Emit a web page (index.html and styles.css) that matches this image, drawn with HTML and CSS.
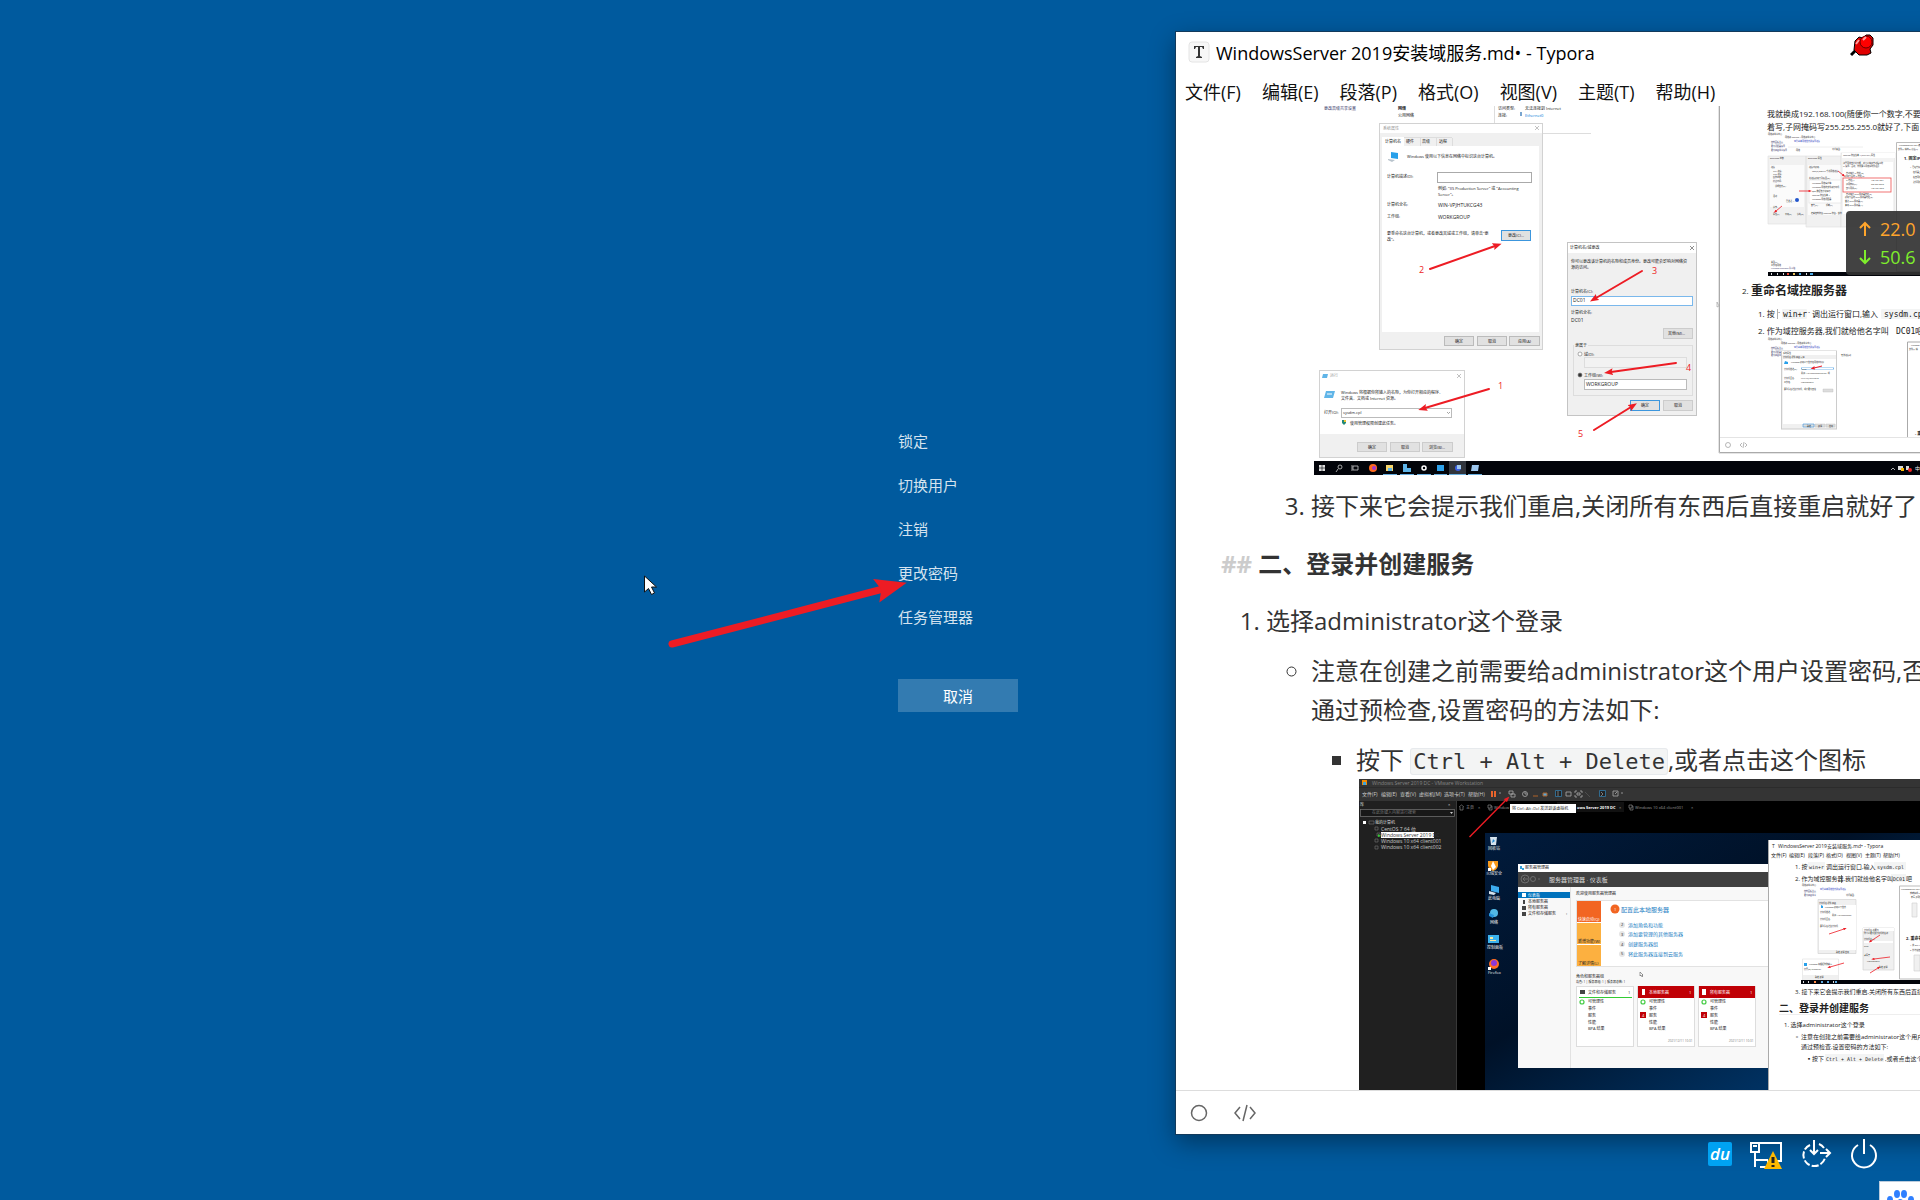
FILE: index.html
```html
<!DOCTYPE html>
<html lang="zh-CN">
<head>
  <meta charset="UTF-8">
  <meta name="viewport" content="width=device-width, initial-scale=1.0">
  <title>WindowsServer 2019安装域服务</title>
  <link rel="stylesheet" href="styles.css">
</head>
<body>
  <div class="desktop">
    <main class="security">
      <div class="security-menu">
        <button class="option">锁定</button>
        <button class="option">切换用户</button>
        <button class="option">注销</button>
        <button class="option">更改密码</button>
        <button class="option">任务管理器</button>
        <button class="cancel">取消</button>
        <svg class="pointer-art" viewBox="0 0 280 90" aria-hidden="true">
          <defs>
            <marker id="head" viewBox="0 0 9 7" refX="2" refY="3.5" markerWidth="4.5" markerHeight="3.5" orient="auto">
              <path d="M0 0 9 3.5 0 7 1.5 3.5z" fill="#ed1c24"/>
            </marker>
          </defs>
          <path d="M32 74 243 19" stroke="#ed1c24" stroke-width="7" stroke-linecap="round" marker-end="url(#head)"/>
          <path d="M4.500 6v16l4-3.500 3 6 3-1.500-3-6h5z" fill="#fff" stroke="#111" stroke-width="1"/>
        </svg>
      </div>
    </main>

    <section class="window">
      <header class="titlebar">
        <svg class="app-icon" viewBox="0 0 22 22" aria-hidden="true">
          <rect x="1" y="1" width="20" height="20" rx="3" fill="#f7f7f7" stroke="#e4e4e4"/>
          <path d="M6 5h10v3h-1l-1-2h-2v9l2 1v1H8v-1l2-1V6H8L7 8H6z" fill="#333"/>
        </svg>
        <h1>WindowsServer 2019安装域服务.md• - Typora</h1>
      </header>
      <nav class="menubar">
        <button>文件(F)</button>
        <button>编辑(E)</button>
        <button>段落(P)</button>
        <button>格式(O)</button>
        <button>视图(V)</button>
        <button>主题(T)</button>
        <button>帮助(H)</button>
      </nav>

      <article class="content">
        <ol class="outer">
          <li class="plain">
            <ol class="inner">
              <li class="plain">
                <svg class="shot" width="710" height="369" viewBox="1314 106 710 369">
                  <!-- 网络设置页面 -->
                  <g class="t4">
                    <text x="1324" y="110" fill="#336">更改高级共享设置</text>
                    <text x="1398" y="110" font-weight="bold">网络</text>
                    <text x="1398" y="117">公用网络</text>
                    <text x="1498" y="110">访问类型:</text>
                    <text x="1525" y="110">无法连接到 Internet</text>
                    <text x="1498" y="117">连接:</text>
                    <text x="1525" y="117" fill="#0078d7">Ethernet0</text>
                  </g>
                  <rect x="1520" y="112" width="2" height="4" fill="#79a5cf"/>
                  <path d="M1494.500 106v17M1543 133.500h48" stroke="#ddd"/>

                  <!-- 系统属性 -->
                  <rect x="1379.500" y="123.500" width="163" height="226" fill="#f0f0f0" stroke="#d2d2d2"/>
                  <rect x="1380" y="124" width="162" height="9" fill="#fff"/>
                  <rect x="1382" y="137" width="22" height="10" fill="#fff"/>
                  <rect x="1382" y="146" width="157" height="186" fill="#fff"/>
                  <path d="M1420.500 138v8M1436.500 138v8M1452.500 138v8M1404 137.500h48" stroke="#ddd"/>
                  <path d="m1535 126 4 4m0-4-4 4" stroke="#999" stroke-width=".6"/>
                  <path d="m1391 152 7 1v6l-7-1z" fill="#28a0ea"/>
                  <path d="m1388 159 7 1-3 2-4-2z" fill="#b8c3cc"/>
                  <g class="t4">
                    <text x="1383" y="130" fill="#999">系统属性</text>
                    <text x="1385" y="143">计算机名</text>
                    <text x="1406" y="143">硬件</text>
                    <text x="1422" y="143">高级</text>
                    <text x="1439" y="143">远程</text>
                    <text x="1387" y="178">计算机描述(D):</text>
                    <text x="1387" y="206">计算机全名:</text>
                    <text x="1387" y="218">工作组:</text>
                    <text x="1387" y="235">要重命名这台计算机，或者更改其域或工作组，请单击"更</text>
                    <text x="1387" y="241">改"。</text>
                    <text x="1407" y="158">Windows 使用以下信息在网络中标识这台计算机。</text>
                    <text x="1438" y="190">例如: "IIS Production Server" 或 "Accounting</text>
                    <text x="1438" y="196">Server"。</text>
                  </g>
                  <g class="t5">
                    <text x="1438" y="207">WIN-VPJHTUKCG43</text>
                    <text x="1438" y="219">WORKGROUP</text>
                  </g>
                  <rect x="1437.500" y="172.500" width="94" height="10" fill="#fff" stroke="#aaa"/>
                  <g fill="#e1e1e1" stroke="#bbb">
                    <rect x="1444.500" y="336.500" width="29" height="9"/>
                    <rect x="1477.500" y="336.500" width="29" height="9"/>
                    <rect x="1509.500" y="336.500" width="30" height="9"/>
                    <rect x="1501.500" y="230.500" width="29" height="10" stroke="#3c96dd"/>
                  </g>
                  <g class="t4">
                    <text x="1508" y="237">更改(C)...</text>
                    <text x="1455" y="343">确定</text>
                    <text x="1488" y="343">取消</text>
                    <text x="1518" y="343">应用(A)</text>
                  </g>

                  <!-- 计算机名/域更改 -->
                  <rect x="1567.500" y="242.500" width="129" height="173" fill="#f0f0f0" stroke="#c4c4c4"/>
                  <rect x="1568" y="243" width="128" height="10" fill="#fff"/>
                  <path d="m1690 246 4 4m0-4-4 4" stroke="#444" stroke-width=".6"/>
                  <rect x="1573.500" y="345.500" width="119" height="50" fill="none" stroke="#ddd"/>
                  <rect x="1574" y="343" width="14" height="5" fill="#f0f0f0"/>
                  <rect x="1571.500" y="296.500" width="121" height="9" fill="#fff" stroke="#7ab8ec"/>
                  <rect x="1584.500" y="357.500" width="102" height="10" fill="#f2f2f2" stroke="#ddd"/>
                  <rect x="1584.500" y="379.500" width="102" height="10" fill="#fff" stroke="#bbb"/>
                  <g fill="#e1e1e1" stroke="#ccc">
                    <rect x="1663.500" y="328.500" width="29" height="10"/>
                    <rect x="1630.500" y="400.500" width="29" height="10" stroke="#3c96dd"/>
                    <rect x="1663.500" y="400.500" width="29" height="10"/>
                  </g>
                  <circle cx="1580" cy="354" r="2" fill="#fff" stroke="#777" stroke-width=".6"/>
                  <circle cx="1580" cy="375" r="2" fill="#333" stroke="#777" stroke-width=".6"/>
                  <g class="t4">
                    <text x="1570" y="249">计算机名/域更改</text>
                    <text x="1571" y="263">你可以更改该计算机的名称和成员身份。更改可能会影响对网络资</text>
                    <text x="1571" y="269">源的访问。</text>
                    <text x="1571" y="293">计算机名(C):</text>
                    <text x="1571" y="314">计算机全名:</text>
                    <text x="1668" y="335">其他(M)...</text>
                    <text x="1575" y="347">隶属于</text>
                    <text x="1584" y="356">域(D):</text>
                    <text x="1584" y="377">工作组(W):</text>
                    <text x="1641" y="407">确定</text>
                    <text x="1674" y="407">取消</text>
                  </g>
                  <g class="t5">
                    <text x="1573" y="302">DC01</text>
                    <text x="1571" y="322">DC01</text>
                    <text x="1586" y="386">WORKGROUP</text>
                  </g>

                  <!-- 运行 -->
                  <rect x="1319.500" y="370.500" width="145" height="87" fill="#fff" stroke="#d2d2d2"/>
                  <rect x="1320" y="434" width="144" height="23" fill="#f0f0f0"/>
                  <path d="m1457 374 4 4m0-4-4 4" stroke="#999" stroke-width=".6"/>
                  <path d="M1323 374h5l-1 4h-5zM1326 391h9l-2 7h-9z" fill="#60b5e8"/>
                  <path d="M1327 394h5" stroke="#fff"/>
                  <rect x="1341.500" y="408.500" width="110" height="9" fill="#fff" stroke="#bbb"/>
                  <path d="m1447 412 1.500 1.500 1.500-1.500" fill="none" stroke="#666" stroke-width=".6"/>
                  <path d="M1342 420h4v3l-2 2-2-2z" fill="#287"/>
                  <path d="M1344 420h2v2h-2z" fill="#f2c230"/>
                  <g fill="#e1e1e1" stroke="#ccc">
                    <rect x="1357.500" y="442.500" width="29" height="9"/>
                    <rect x="1390.500" y="442.500" width="29" height="9"/>
                    <rect x="1422.500" y="442.500" width="30" height="9"/>
                  </g>
                  <g class="t4">
                    <text x="1330" y="377" fill="#999">运行</text>
                    <text x="1341" y="394">Windows 将根据你所输入的名称，为你打开相应的程序、</text>
                    <text x="1341" y="400">文件夹、文档或 Internet 资源。</text>
                    <text x="1324" y="414">打开(O):</text>
                    <text x="1343" y="414">sysdm.cpl</text>
                    <text x="1350" y="425">使用管理权限创建此任务。</text>
                    <text x="1368" y="449">确定</text>
                    <text x="1401" y="449">取消</text>
                    <text x="1429" y="449">浏览(B)...</text>
                  </g>

                  <g stroke="#ed1c24" stroke-width="2" stroke-linecap="round">
                    <path d="M1430 269 1495 246" marker-end="url(#head)"/>
                    <path d="M1642 271 1596 298" marker-end="url(#head)"/>
                    <path d="M1676 363 1611 372" marker-end="url(#head)"/>
                    <path d="M1594 430 1631 407" marker-end="url(#head)"/>
                    <path d="M1489 389 1425 408" marker-end="url(#head)"/>
                  </g>
                  <g class="t9" fill="#ed1c24">
                    <text x="1498" y="389">1</text>
                    <text x="1419" y="273">2</text>
                    <text x="1652" y="274">3</text>
                    <text x="1686" y="371">4</text>
                    <text x="1578" y="437">5</text>
                  </g>

                  <!-- 任务栏 -->
                  <rect x="1314" y="461" width="710" height="14" fill="#02040a"/>
                  <path d="M1319 465h6v6h-6z" fill="#ddd"/>
                  <path d="M1322 465v6M1319 468h6" stroke="#02040a" stroke-width=".6"/>
                  <g fill="none" stroke="#ccc" stroke-width=".8">
                    <circle cx="1340" cy="467" r="2"/>
                    <path d="m1338 469-2 3M1353 466h5v4h-5zM1352 465v6"/>
                    <circle cx="1424" cy="468" r="2" stroke="#fff" stroke-width="1.500"/>
                  </g>
                  <circle cx="1373" cy="468" r="4" fill="#ff6a1f"/>
                  <circle cx="1374" cy="468" r="2" fill="#a13ad0"/>
                  <path d="M1386 465h7v6h-7z" fill="#f6d56b"/>
                  <path d="M1388 468h4v3h-4zM1403 464h4v4h4v4h-8z" fill="#5eb4e8"/>
                  <path d="M1437 465h7v6h-7z" fill="#2ea1ea"/>
                  <rect x="1449" y="461" width="17" height="14" fill="#30343c"/>
                  <circle cx="1458" cy="468" r="3" fill="#3a5fe0"/>
                  <path d="M1457 465h4v4h-4zM1472 465h7l-1 6h-7z" fill="#9cc6ee"/>
                  <path d="M1383 474.500h14M1400 474.500h14M1417 474.500h14M1434 474.500h13M1449 474.500h17M1468 474.500h14" stroke="#69afe0"/>
                  <path d="m1891 470 2-2 2 2" fill="none" stroke="#ddd" stroke-width=".8"/>
                  <path d="M1898 466h5v4h-5zM1906 466h3v4h-3z" fill="#ddd"/>
                  <path d="M1901 468h3v3h-3z" fill="#fb0"/>
                  <circle cx="1910" cy="470" r="2" fill="#e22"/>
                  <text class="t5" x="1915" y="470" fill="#eee">中</text>

                  <!-- 右侧的文档窗口 -->
                  <path d="M1720 106h304v346h-304z" fill="#fff"/>
                  <path d="M1719.500 106v346.500H2024" fill="none" stroke="#aaa"/>
                  <path d="M1718.500 106v347M1719 453.500h305M1720 437.500h304" stroke="#e4e4e4"/>
                  <path d="M1717 302v5l2-1z" fill="#fff" stroke="#999" stroke-width=".6"/>
                  <g class="t8">
                    <text x="1767" y="117">我就换成192.168.100(随便你一个数字,不要跟</text>
                    <text x="1767" y="130">着写,子网掩码写255.255.255.0就好了,下面</text>
                  </g>
                  <g class="t2">
                    <text x="1768" y="135">网络和共享中心</text>
                    <text x="1785" y="138">网络和 Internet &gt; 网络和共享中心</text>
                    <text x="1794" y="142" fill="#23b">查看基本网络信息并设置连接</text>
                    <text x="1771" y="143" fill="#336">控制面板主页</text>
                    <text x="1771" y="147" fill="#336">更改适配器设置</text>
                    <text x="1771" y="151" fill="#336">更改高级共享设置</text>
                    <text x="1796" y="151">网络</text>
                    <text x="1832" y="150">访问类型:</text>
                  </g>
                  <path d="M1788 147h75" stroke="#eee"/>
                  <path d="M1768 156h38v68h-38zM1806 156h35v71h-35z" fill="#f1f1f1" stroke="#ddd" stroke-width=".6"/>
                  <path d="M1770 165h34v42h-34zM1808 165h33v50h-33z" fill="#fbfbfb"/>
                  <rect x="1841" y="153" width="54" height="74" fill="#f3f3f3" stroke="#ddd" stroke-width=".6"/>
                  <path d="M1842 153h53v5h-53zM1843 162h50v52h-50z" fill="#fff"/>
                  <rect x="1809" y="180" width="32" height="23" fill="#fff" stroke="#ddd" stroke-width=".6"/>
                  <g class="t2">
                    <text x="1770" y="159">Ethernet0 状态</text>
                    <text x="1808" y="159">Ethernet0 属性</text>
                    <text x="1843" y="156">Internet 协议版本 4 (TCP/IPv4) 属性</text>
                    <text x="1771" y="168">连接</text>
                    <text x="1773" y="172">IPv4 连接:</text>
                    <text x="1773" y="175">IPv6 连接:</text>
                    <text x="1773" y="178">媒体状态:</text>
                    <text x="1773" y="182">持续时间:</text>
                    <text x="1775" y="187">详细信息(E)...</text>
                    <text x="1773" y="197">活动</text>
                    <text x="1786" y="202">已发送 —</text>
                    <text x="1773" y="208">字节:</text>
                    <text x="1773" y="215">属性(P)</text>
                    <text x="1785" y="215">禁用(D)</text>
                    <text x="1797" y="215">诊断(G)</text>
                    <text x="1809" y="168">连接时使用:</text>
                    <text x="1812" y="172">Intel(R) 82574L 千兆网络连接</text>
                    <text x="1809" y="179">此连接使用下列项目(O):</text>
                    <text x="1812" y="184">Microsoft 网络客户端</text>
                    <text x="1812" y="188">Microsoft 网络的文件和打印机</text>
                    <text x="1812" y="192">QoS 数据包计划程序</text>
                    <text x="1812" y="196">Internet 协议版本 4</text>
                    <text x="1812" y="200">Microsoft 网络适配器</text>
                    <text x="1811" y="206">安装(N)...</text>
                    <text x="1826" y="206">卸载(U)</text>
                    <text x="1811" y="214">传输控制协议/Internet 协议。该协</text>
                    <text x="1843" y="164">如果网络支持此功能，则可以获取自动指派的</text>
                    <text x="1843" y="167">IP 设置。否则，你需要从网络系统管理员</text>
                    <text x="1846" y="174">自动获得 IP 地址(O)</text>
                    <text x="1845" y="177">使用下面的 IP 地址(S):</text>
                    <text x="1846" y="181">IP 地址(I):</text>
                    <text x="1846" y="185">子网掩码(U):</text>
                    <text x="1846" y="189">默认网关(D):</text>
                    <text x="1871" y="181">192.168.100.1</text>
                    <text x="1871" y="185">255.255.255.0</text>
                    <text x="1871" y="189">192.168.100.2</text>
                    <text x="1846" y="195">自动获得 DNS 服务器地址(B)</text>
                    <text x="1845" y="198">使用下面的 DNS 服务器地址(E):</text>
                    <text x="1845" y="202">首选 DNS 服务器(P):</text>
                    <text x="1845" y="206">备用 DNS 服务器(A):</text>
                    <text x="1771" y="263">类型(T)</text>
                    <text x="1771" y="266">工作组网络</text>
                    <text x="1771" y="269" fill="#336">Windows Defender 防火墙</text>
                  </g>
                  <circle cx="1797" cy="200" r="2" fill="#25c"/>
                  <rect x="1843" y="178" width="48" height="14" fill="none" stroke="#ed5050" stroke-width=".8"/>
                  <g stroke="#ed1c24" stroke-width=".8">
                    <path d="M1799 191h10" marker-end="url(#head)"/>
                    <path d="m1782 206-6 5" marker-end="url(#head)"/>
                    <path d="m1838 171 5 4" marker-end="url(#head)"/>
                  </g>
                  <path d="M1896.500 142.500H2024v129h-127.500z" fill="#fff" stroke="#bbb"/>
                  <g class="t2">
                    <text x="1899" y="146">WindowsServer 2019安装域服务</text>
                    <text x="1898" y="150">文件(F) 编辑(E) 段落(P)</text>
                    <text x="1910" y="168">1. 已经装好</text>
                    <text x="1913" y="173">在机器上打开</text>
                    <text x="1913" y="178">右击网络图标</text>
                    <text x="1913" y="183">选择网络设置</text>
                  </g>
                  <text class="t4" x="1904" y="160" font-weight="bold">1. 固定IP</text>
                  <rect x="1768" y="272" width="256" height="4" fill="#02040a"/>
                  <path d="M1771 274h1m5 0h1m5 0h1m16 0h1m5 0h1" stroke="#ddd" stroke-width="2"/>
                  <path d="M1787 274h2" stroke="#e43" stroke-width="2"/>
                  <path d="M1793 274h2" stroke="#edc45d" stroke-width="2"/>
                  <path d="M1799 274h2m9 0h3" stroke="#4aa8e4" stroke-width="2"/>

                  <text class="t8" x="1742" y="294">2.</text>
                  <text class="t12" x="1751" y="295" font-weight="bold">重命名域控服务器</text>
                  <rect x="1782" y="309" width="25" height="10" rx="1" fill="#f3f4f4"/>
                  <rect x="1881" y="309" width="60" height="10" rx="1" fill="#f3f4f4"/>
                  <g class="t8">
                    <text x="1758" y="317">1. 按</text>
                    <text x="1778" y="317">`</text>
                    <text class="mono" x="1783" y="317">win+r</text>
                    <text x="1808" y="317">`</text>
                    <text x="1812" y="317">调出运行窗口,输入</text>
                    <text class="mono" x="1884" y="317">sysdm.cpl</text>
                    <text x="1758" y="334">2. 作为域控服务器,我们就给他名字叫</text>
                    <text class="mono" x="1896" y="334">DC01</text>
                    <text x="1915" y="334">吧</text>
                  </g>
                  <path d="M1777.500 309v10" stroke="#777" stroke-width=".6"/>

                  <g class="t2">
                    <text x="1768" y="340">网络和共享中心</text>
                    <text x="1781" y="344">网络和 Internet &gt; 网络和共享中心</text>
                    <text x="1794" y="348" fill="#23b">查看基本网络信息并设置连接</text>
                    <text x="1771" y="349" fill="#336">控制面板主页</text>
                    <text x="1771" y="353" fill="#336">更改适配器</text>
                    <text x="1771" y="356" fill="#336">更改高级共享</text>
                    <text x="1841" y="356">无法连接到</text>
                  </g>
                  <rect x="1781.500" y="351" width="55" height="78" fill="#f0f0f0" stroke="#ccc"/>
                  <path d="M1782 351h54v4h-54zM1783 359h53v65h-53z" fill="#fff"/>
                  <path d="M1801 368.500h33" stroke="#7ab8ec" stroke-width="2"/>
                  <path d="M1802 368.500h31" stroke="#fff"/>
                  <path d="m1785 361 3 1v2h-4z" fill="#28a0ea"/>
                  <path d="M1823 389h10v3h-10zM1815 424h10v3h-10zM1826 424h9v3h-9z" fill="#ddd" stroke="#bbb" stroke-width=".4"/>
                  <path d="M1803 424h11v3h-11z" fill="#ddd" stroke="#3c96dd" stroke-width=".6"/>
                  <g class="t2">
                    <text x="1783" y="354">系统属性</text>
                    <text x="1783" y="358">计算机名  硬件  高级  远程</text>
                    <text x="1791" y="363">Windows 使用以下信息在网络中标识</text>
                    <text x="1784" y="370">计算机描述(D):</text>
                    <text x="1802" y="370">DC01</text>
                    <text x="1801" y="374">例如: "IIS Production Server" 或</text>
                    <text x="1784" y="379">计算机全名:</text>
                    <text x="1801" y="379">WIN-VPJHTUKCG43</text>
                    <text x="1784" y="383">工作组:</text>
                    <text x="1801" y="383">WORKGROUP</text>
                    <text x="1784" y="390">要重命名这台计算机，或者更改其域</text>
                    <text x="1807" y="427">确定</text>
                    <text x="1818" y="427">取消</text>
                    <text x="1829" y="427">应用</text>
                  </g>
                  <path d="m1822 366-8 2" stroke="#ed1c24" marker-end="url(#head)"/>
                  <path d="M1907.500 437v-95H2024" fill="none" stroke="#aaa"/>
                  <g class="t2">
                    <text x="1911" y="346">Windows</text>
                    <text x="1909" y="350">文件(F) 编</text>
                  </g>
                  <text class="t4" x="1915" y="435" font-weight="bold">- 重</text>
                  <circle cx="1728" cy="445" r="2.500" fill="none" stroke="#888" stroke-width=".6"/>
                  <path d="m1742 443-2 2 2 2m3-4 2 2-2 2m-1-5-1 6" fill="none" stroke="#888" stroke-width=".6"/>
                </svg>
              </li>
              <li class="step" value="3">接下来它会提示我们重启,关闭所有东西后直接重启就好了</li>
            </ol>
          </li>
        </ol>

        <h2><span class="hash">##</span> 二、登录并创建服务</h2>

        <ol class="outer">
          <li>选择administrator这个登录
            <ul class="circle">
              <li>注意在创建之前需要给administrator这个用户设置密码,否则<br>通过预检查,设置密码的方法如下:
                <ul class="square">
                  <li>按下 <code>Ctrl + Alt + Delete</code>,或者点击这个图标
                    <svg class="shot" width="650" height="360" viewBox="1359 780 650 360">
                      <defs>
                        <linearGradient id="wall" x1="0" y1="0" x2="1" y2="1">
                          <stop offset="0" stop-color="#011b3c"/>
                          <stop offset=".35" stop-color="#001127"/>
                          <stop offset="1" stop-color="#005099"/>
                        </linearGradient>
                      </defs>
                      <!-- 虚拟机主窗口 -->
                      <rect x="1359" y="780" width="650" height="360" fill="#000"/>
                      <rect x="1359" y="780" width="650" height="22" fill="#343434"/>
                      <path d="M1359 788.500h650" stroke="#2b2b2b"/>
                      <rect x="1359" y="802" width="97" height="338" fill="#202020"/>
                      <path d="M1456.500 802v338" stroke="#383838"/>
                      <path d="M1362 781h5v5h-5z" fill="#f38b00"/>
                      <path d="M1363 783h3v3h-3z" fill="#41a3d8"/>
                      <text class="t5" x="1372" y="786" fill="#858585">Windows Server 2019 DC - VMware Workstation</text>
                      <g class="t5" fill="#ccc">
                        <text x="1362" y="797">文件(F)</text>
                        <text x="1381" y="797">编辑(E)</text>
                        <text x="1400" y="797">查看(V)</text>
                        <text x="1419" y="797">虚拟机(M)</text>
                        <text x="1444" y="797">选项卡(T)</text>
                        <text x="1468" y="797">帮助(H)</text>
                      </g>
                      <path d="M1492 792v6M1495 792v6" stroke="#e8642c" stroke-width="2"/>
                      <g fill="none" stroke="#aaa" stroke-width=".8">
                        <path d="M1499 794h2M1509 792h4v3h-4zM1511 795h4v3h-4z"/>
                        <circle cx="1525" cy="795" r="2.500"/>
                        <path d="M1525 793v2h2M1566 793h5v4h-5zM1575 792h2m3 0h2v2m0 2v2h-2m-3 0h-2v-2m0-2v-2M1577 794h3v2h-3z"/>
                        <path d="M1585 793l5 5" stroke="#555"/>
                        <path d="M1613 792h5v5h-5zM1615 795l2-2"/>
                        <path d="M1621 794h2"/>
                      </g>
                      <path d="M1533 797h5m5-3h4v3h-4z" stroke="#af6328" fill="#51a5db"/>
                      <path d="M1555.500 791.500h6v6h-6zM1599.500 791.500h6v6h-6z" fill="#222" stroke="#337ba8" stroke-width=".8"/>
                      <path d="m1601 793 2 2-2 2M1558 792v5" fill="none" stroke="#bbb" stroke-width=".6"/>

                      <rect x="1360.500" y="810.500" width="94" height="7" fill="#181818" stroke="#777" stroke-width=".7"/>
                      <path d="m1450 813 3 0-1.500 2z" fill="#ccc"/>
                      <rect x="1381" y="833" width="53" height="6" fill="#fff"/>
                      <path d="M1363 822h3v3h-3z" fill="#fff"/>
                      <path d="M1369 822h5v3h-5zM1375 828h3v3h-3zM1377 834h3v3h-3zM1375 840h3v3h-3zM1375 847h3v3h-3z" fill="none" stroke="#777" stroke-width=".6"/>
                      <path d="m1378 835 3 2-3 1z" fill="#3c3"/>
                      <g class="t4" fill="#ddd">
                        <text x="1360" y="807">库</text>
                        <text x="1448" y="807">×</text>
                        <text x="1372" y="815" fill="#777">在此处键入内容进行搜索</text>
                        <text x="1375" y="825">我的计算机</text>
                      </g>
                      <g class="t5" fill="#ccc">
                        <text x="1381" y="832">CentOS 7 64 位</text>
                        <text x="1381" y="838" fill="#333">Windows Server 2019 DC</text>
                        <text x="1381" y="844">Windows 10 x64 client001</text>
                        <text x="1381" y="850">Windows 10 x64 client002</text>
                      </g>

                      <path d="M1557 803h67v10h-67z" fill="#111"/>
                      <g class="t4" fill="#999">
                        <path d="m1459 808 2.500-2 2.500 2m-4 0v3h3v-3" fill="none" stroke="#999" stroke-width=".6"/>
                        <text x="1466" y="810">主页</text>
                        <text x="1478" y="810">×</text>
                        <path d="M1488 806h3v3h-3zM1489 809v2h3v-4h-1M1629 806h3v3h-3zM1630 809v2h3v-4h-1" fill="none" stroke="#999" stroke-width=".6"/>
                        <text x="1494" y="810">Window</text>
                        <text x="1577" y="810" fill="#fff" font-weight="bold">ows Server 2019 DC</text>
                        <text x="1619" y="810">×</text>
                        <text x="1635" y="810">Windows 10 x64 client001</text>
                        <text x="1691" y="810">×</text>
                      </g>
                      <rect x="1510" y="805" width="66" height="9" fill="#fff"/>
                      <text class="t4" x="1512" y="811">将 Ctrl+Alt+Del 发送到该虚拟机</text>

                      <!-- 服务器桌面 -->
                      <rect x="1485" y="834" width="524" height="306" fill="url(#wall)"/>
                      <path d="M1490 838h7l-1 8h-5z" fill="#d5e3ee"/>
                      <path d="m1493 840 2 2-3 2z" fill="#268bd0"/>
                      <path d="M1488 862h10v5q-1 4-5 5-4-1-5-5z" fill="#f79a1c"/>
                      <path d="m1493 862 3 6-3 3-2-4z" fill="#fff"/>
                      <path d="m1491 886 8 2v6l-8-2z" fill="#3cacf0"/>
                      <path d="m1489 892 7 2-2 2-5-1z" fill="#d5e3ee"/>
                      <circle cx="1494" cy="914" r="4" fill="#52b9e7"/>
                      <path d="m1489 914 5 2-1 3-4-2z" fill="#2794dc"/>
                      <path d="M1488 936h11v8h-11z" fill="#3bb2ed"/>
                      <path d="M1490 938h3v2h-3zM1490 941h6v1h-6z" fill="#f6e8a0"/>
                      <circle cx="1494" cy="965" r="5" fill="#ff6d23"/>
                      <circle cx="1494" cy="964" r="3" fill="#8e37d8"/>
                      <path d="M1488 968h3v3h-3zM1488 869h3v3h-3z" fill="#fff"/>
                      <g class="t4" fill="#eee">
                        <text x="1488" y="851">回收站</text>
                        <text x="1486" y="876">火绒安全</text>
                        <text x="1488" y="901">此电脑</text>
                        <text x="1490" y="925">网络</text>
                        <text x="1487" y="950">控制面板</text>
                        <text x="1488" y="975">Firefox</text>
                      </g>

                      <!-- 服务器管理器 -->
                      <rect x="1518" y="865" width="260" height="204" fill="#f8f8f8"/>
                      <rect x="1518" y="865" width="260" height="8" fill="#fff"/>
                      <rect x="1518" y="873" width="260" height="15" fill="#404040"/>
                      <path d="M1570.500 888v181" stroke="#e2e2e2"/>
                      <rect x="1518" y="893" width="52" height="6" fill="#0072bc"/>
                      <path d="M1520 867h2v3h-2zM1522 869h2v2h-2z" fill="#38a0d8"/>
                      <g fill="none" stroke="#777" stroke-width=".8">
                        <circle cx="1525" cy="880" r="4"/>
                        <path d="m1525 878-2 2 2 2m-2-2h5"/>
                        <circle cx="1533" cy="880" r="2.500"/>
                        <path d="M1538 880h2"/>
                      </g>
                      <path d="M1522 894h4v4h-4z" fill="#fff"/>
                      <path d="M1523 901h2v4h-2zM1522 907h4v4h-4zM1522 913h4v4h-4z" fill="#444"/>
                      <g class="t4">
                        <text x="1525" y="870">服务器管理器</text>
                        <text x="1528" y="898" fill="#fff">仪表板</text>
                        <text x="1528" y="904">本地服务器</text>
                        <text x="1528" y="910">所有服务器</text>
                        <text x="1528" y="916">文件和存储服务</text>
                        <text x="1566" y="916">›</text>
                        <text x="1576" y="896">欢迎使用服务器管理器</text>
                      </g>
                      <text class="t6" x="1549" y="883" fill="#ddd">服务器管理器 · 仪表板</text>
                      <rect x="1576.500" y="901.500" width="210" height="66" fill="#fff" stroke="#e2e2e2"/>
                      <path d="M1577 902h24v21h-24z" fill="#f26522"/>
                      <path d="M1577 924h24v21h-24zM1577 946h24v21h-24z" fill="#fcb040"/>
                      <circle cx="1615" cy="910" r="4.500" fill="#f26522"/>
                      <g fill="#e6e6e6">
                        <circle cx="1622" cy="926" r="3"/>
                        <circle cx="1622" cy="935" r="3"/>
                        <circle cx="1622" cy="945" r="3"/>
                        <circle cx="1622" cy="955" r="3"/>
                      </g>
                      <g class="t4">
                        <text x="1578" y="922" fill="#fff">快速启动(Q)</text>
                        <text x="1578" y="944">新增功能(W)</text>
                        <text x="1578" y="966">了解详情(L)</text>
                        <text x="1614" y="912" fill="#fff">1</text>
                        <text x="1621" y="927">2</text>
                        <text x="1621" y="937">3</text>
                        <text x="1621" y="947">4</text>
                        <text x="1621" y="956">5</text>
                        <text x="1576" y="979">角色和服务器组</text>
                      </g>
                      <text class="t3" x="1576" y="984">角色: 1 | 服务器组: 1 | 服务器总数: 1</text>
                      <text class="t6" x="1621" y="913" fill="#2580c3">配置此本地服务器</text>
                      <g class="t5" fill="#2580c3">
                        <text x="1628" y="928">添加角色和功能</text>
                        <text x="1628" y="937">添加要管理的其他服务器</text>
                        <text x="1628" y="947">创建服务器组</text>
                        <text x="1628" y="957">将此服务器连接到云服务</text>
                      </g>
                      <path d="M1640 973v4l1-1 1 2 1-1-1-1h1z" fill="#fff" stroke="#444" stroke-width=".5"/>
                      <g fill="#fff" stroke="#ddd">
                        <rect x="1576.500" y="987.500" width="57" height="60"/>
                        <rect x="1637.500" y="987.500" width="57" height="60"/>
                        <rect x="1698.500" y="987.500" width="57" height="60"/>
                      </g>
                      <path d="M1638 987h56v12h-56zM1699 987h56v12h-56zM1640 1013h6v6h-6zM1701 1013h6v6h-6z" fill="#c00006"/>
                      <path d="M1579 998.500h53" stroke="#3c3"/>
                      <path d="M1580 991h5v4h-5z" fill="#444"/>
                      <path d="M1642 990h3v6h-3zM1702 990h4v6h-4z" fill="#fff"/>
                      <g fill="#fff" stroke="#4c4" stroke-width="1.200">
                        <circle cx="1582" cy="1003" r="2"/>
                        <circle cx="1643" cy="1003" r="2"/>
                        <circle cx="1704" cy="1003" r="2"/>
                      </g>
                      <g class="t4">
                        <text x="1588" y="995">文件和存储服务</text>
                        <text x="1628" y="995">1</text>
                        <text x="1649" y="995" fill="#fff">本地服务器</text>
                        <text x="1689" y="995" fill="#fff">1</text>
                        <text x="1710" y="995" fill="#fff">所有服务器</text>
                        <text x="1750" y="995" fill="#fff">1</text>
                        <text x="1588" y="1004">可管理性</text>
                        <text x="1588" y="1011">事件</text>
                        <text x="1588" y="1018">服务</text>
                        <text x="1588" y="1025">性能</text>
                        <text x="1588" y="1031">BPA 结果</text>
                        <text x="1649" y="1004">可管理性</text>
                        <text x="1649" y="1011">事件</text>
                        <text x="1649" y="1018">服务</text>
                        <text x="1649" y="1025">性能</text>
                        <text x="1649" y="1031">BPA 结果</text>
                        <text x="1710" y="1004">可管理性</text>
                        <text x="1710" y="1011">事件</text>
                        <text x="1710" y="1018">服务</text>
                        <text x="1710" y="1025">性能</text>
                        <text x="1710" y="1031">BPA 结果</text>
                        <text x="1642" y="1018" fill="#fff">4</text>
                        <text x="1703" y="1018" fill="#fff">4</text>
                      </g>
                      <g class="t3" fill="#777">
                        <text x="1668" y="1043">2021/12/11 10:31</text>
                        <text x="1729" y="1043">2021/12/11 10:31</text>
                      </g>

                      <!-- 桌面上的文档窗口 -->
                      <rect x="1768" y="841" width="241" height="299" fill="#fff"/>
                      <path d="M1768.500 841v299" stroke="#aaa"/>
                      <g class="t5">
                        <text x="1772" y="849">T</text>
                        <text x="1778" y="849">WindowsServer 2019安装域服务.md• - Typora</text>
                        <text x="1771" y="858">文件(F)</text>
                        <text x="1789" y="858">编辑(E)</text>
                        <text x="1808" y="858">段落(P)</text>
                        <text x="1826" y="858">格式(O)</text>
                        <text x="1846" y="858">视图(V)</text>
                        <text x="1865" y="858">主题(T)</text>
                        <text x="1883" y="858">帮助(H)</text>
                      </g>
                      <path d="M1808 863h17v8h-17zM1874 863h32v8h-32zM1891 875h15v8h-15zM1825 1055h59v8h-59z" fill="#f3f4f4"/>
                      <g class="t6">
                        <text x="1795" y="870">1. 按</text>
                        <text class="mono" x="1809" y="870">win+r</text>
                        <text x="1826" y="870">调出运行窗口,输入</text>
                        <text class="mono" x="1877" y="870">sysdm.cpl</text>
                        <text x="1795" y="882">2. 作为域控服务器,我们就给他名字叫</text>
                        <text class="mono" x="1893" y="882">DC01</text>
                        <text x="1906" y="882">吧</text>
                        <text x="1795" y="995">3. 接下来它会提示我们重启,关闭所有东西后直接重启</text>
                        <text x="1784" y="1028">1. 选择administrator这个登录</text>
                        <text x="1794" y="1040">◦</text>
                        <text x="1801" y="1040">注意在创建之前需要给administrator这个用户设置</text>
                        <text x="1801" y="1050">通过预检查,设置密码的方法如下:</text>
                        <text x="1806" y="1062">▪</text>
                        <text x="1812" y="1062">按下</text>
                        <text class="mono" x="1826" y="1062">Ctrl + Alt + Delete</text>
                        <text x="1885" y="1062">,或者点击这个图标</text>
                      </g>
                      <text class="t10" x="1779" y="1013" font-weight="bold">二、登录并创建服务</text>
                      <path d="M1841.500 876v8" stroke="#333" stroke-width=".6"/>
                      <path d="M1779 1015.500h230" stroke="#eee"/>
                      <g class="t2">
                        <text x="1802" y="887">网络和共享中心</text>
                        <text x="1820" y="891" fill="#23b">查看基本网络信息并设置连接</text>
                        <text x="1804" y="893" fill="#336">控制面板主页</text>
                        <text x="1804" y="897" fill="#336">更改高级共享</text>
                        <text x="1846" y="897">访问类型:</text>
                      </g>
                      <path d="M1818 900.500h38v54h-38z" fill="#f0f0f0" stroke="#ccc" stroke-width=".6"/>
                      <path d="M1819 906h37v45h-37z" fill="#fff"/>
                      <path d="M1863 929h31v42h-31z" fill="#f0f0f0" stroke="#ccc" stroke-width=".6"/>
                      <path d="M1863 929h31v3h-31zM1864 942h29v2h-29z" fill="#fff"/>
                      <path d="M1802.500 960h36v21h-36z" fill="#fff" stroke="#ddd" stroke-width=".6"/>
                      <path d="M1803 976h35v5h-35z" fill="#f0f0f0"/>
                      <path d="m1821 906 2 1v2h-2zM1804 964h3v3h-3z" fill="#28a0ea"/>
                      <g class="t2">
                        <text x="1819" y="905">计算机名  硬件  高级</text>
                        <text x="1825" y="909">Windows 使用以下信息</text>
                        <text x="1820" y="914">计算机描述:</text>
                        <text x="1832" y="917">例如: "IIS Production"</text>
                        <text x="1820" y="921">计算机全名:</text>
                        <text x="1820" y="928">要重命名这台计算机</text>
                        <text x="1836" y="954">确定    取消    应用</text>
                        <text x="1864" y="932">计算机名/域更改</text>
                        <text x="1864" y="935">你可以更改该计算机的名称</text>
                        <text x="1864" y="941">计算机名(C):</text>
                        <text x="1864" y="948">DC01</text>
                        <text x="1864" y="957">隶属于</text>
                        <text x="1867" y="963">WORKGROUP</text>
                        <text x="1879" y="969">确定    取消</text>
                        <text x="1809" y="966">Windows 将根据你所输入</text>
                        <text x="1804" y="971">打开(O): sysdm.cpl</text>
                        <text x="1815" y="979">确定    取消</text>
                      </g>
                      <g stroke="#ed1c24" stroke-width=".8">
                        <path d="m1829 935 15-5" marker-end="url(#head)"/>
                        <path d="m1880 936-9 6" marker-end="url(#head)"/>
                        <path d="m1890 958-16 2" marker-end="url(#head)"/>
                        <path d="m1870 974 8-5" marker-end="url(#head)"/>
                        <path d="m1844 964-14 4" marker-end="url(#head)"/>
                      </g>
                      <path d="M1899.500 887H2009v93h-109.500z" fill="#fff" stroke="#bbb"/>
                      <g class="t2">
                        <text x="1901" y="891">WindowsServer 2019</text>
                        <text x="1910" y="895">我就换成192.168.100</text>
                        <text x="1911" y="899">着写,子网掩码写</text>
                        <text x="1910" y="947">1. 按 win+r</text>
                        <text x="1910" y="952">2. 作为域控服务器</text>
                      </g>
                      <path d="M1912 904h5v14h-5zM1914 956h6v16h-6z" fill="#f0f0f0" stroke="#ccc" stroke-width=".6"/>
                      <text class="t4" x="1906" y="941" font-weight="bold">2. 重命名域控服务器</text>
                      <rect x="1801" y="981" width="208" height="4" fill="#02040a"/>
                      <path d="M1803 983h1m4 0h1m24 0h1" stroke="#ddd" stroke-width="2"/>
                      <path d="M1814 983h2" stroke="#f84" stroke-width="2"/>
                      <path d="M1821 983h2m4 0h2m6 0h2" stroke="#5ba9e0" stroke-width="2"/>

                      <path d="M1469.500 838 1506 801" stroke="#ed1c24" stroke-width="1.400" marker-end="url(#head)"/>
                    </svg>
                  </li>
                </ul>
              </li>
            </ul>
          </li>
        </ol>
      </article>

      <footer class="statusbar">
        <button aria-label="侧边栏">
          <svg width="18" height="18" viewBox="0 0 18 18"><circle cx="9" cy="9" r="7.500" fill="none" stroke="#666" stroke-width="1.500"/></svg>
        </button>
        <button aria-label="源代码模式">
          <svg width="22" height="18" viewBox="0 0 22 18"><path d="m6 3-5 6 5 6M16 3l5 6-5 6M13 1 9 17" fill="none" stroke="#666" stroke-width="1.500"/></svg>
        </button>
      </footer>
    </section>

    <svg class="pin" viewBox="0 0 24 24" aria-hidden="true">
      <path d="M1 21 6 16" stroke="#000" stroke-width="3"/>
      <path d="M5 7 9 3l4 1 3-3h4l3 3v7l-3 4 1 4-4 2H9l-5-5z" fill="#e00000" stroke="#000"/>
      <circle cx="16" cy="8" r="6" fill="#f00" stroke="#600"/>
      <path d="m13 6 3-3M6 10l3-4" stroke="#ff9c9c" stroke-width="2"/>
    </svg>

    <aside class="netspeed">
      <div class="up">
        <svg width="12" height="16" viewBox="0 0 12 16"><path d="M6 15V2M1 7l5-5 5 5" fill="none" stroke="currentColor" stroke-width="2"/></svg>
        <span>22.0 K/s</span>
      </div>
      <div class="down">
        <svg width="12" height="16" viewBox="0 0 12 16"><path d="M6 1v13M1 9l5 5 5-5" fill="none" stroke="currentColor" stroke-width="2"/></svg>
        <span>50.6 K/s</span>
      </div>
    </aside>

    <div class="tray">
      <button class="ime" aria-label="输入法">du</button>
      <button aria-label="网络">
        <svg width="32" height="32" viewBox="0 0 32 32" fill="none">
          <path d="M10 5h21v18h-8M1 5h8v9H1zM5 14v15M5 22h13M10 29h8v-6" stroke="#fff" stroke-width="2"/>
          <path d="M3 7h4v2H3z" fill="#fff"/>
          <path d="m23 13 9 18H14z" fill="#fdb900"/>
          <path d="M23 19v6M23 27v2" stroke="#222" stroke-width="3"/>
        </svg>
      </button>
      <button aria-label="轻松使用">
        <svg width="32" height="32" viewBox="0 0 32 32" fill="none" stroke="#fff" stroke-width="2">
          <path d="M10 7a11 11 0 1 0 15 13" stroke-dasharray="7 2"/>
          <path d="M19 6a11 11 0 0 1 5 4"/>
          <path d="M14 2v14m-4-4 4 4 4-4M20 15h10m-4-4 4 4-4 4"/>
        </svg>
      </button>
      <button aria-label="电源">
        <svg width="28" height="32" viewBox="0 0 28 32" fill="none" stroke="#fff" stroke-width="2">
          <path d="M8 7a12 12 0 1 0 12 0M14 1v15"/>
        </svg>
      </button>
    </div>

    <div class="paw">
      <svg width="40" height="32" viewBox="0 0 40 32" fill="#2f80ff">
        <ellipse cx="17" cy="12" rx="3" ry="4"/>
        <ellipse cx="24" cy="12" rx="3" ry="4"/>
        <ellipse cx="10" cy="18" rx="3" ry="4"/>
        <ellipse cx="31" cy="18" rx="3" ry="4"/>
        <path d="M20 17q3 0 5 4l5 5v6H11v-6l5-5q2-4 4-4z"/>
      </svg>
    </div>
  </div>
</body>
</html>
```
FILE: styles.css
```css
* {
  box-sizing: border-box;
}
body {
  margin: 0;
  font-family: "Open Sans", "Noto Sans CJK SC", sans-serif;
  background-color: #005a9e;
}
button {
  background: none;
  border: none;
  padding: 0;
  font: inherit;
  color: inherit;
  cursor: pointer;
}
.desktop {
  position: relative;
  min-height: 100vh;
  overflow: hidden;
}

/* 安全选项菜单 */
.security {
  display: flex;
  align-items: center;
  justify-content: center;
  min-height: 100vh;
  padding-bottom: 70px;
}
.security-menu {
  position: relative;
  display: flex;
  flex-direction: column;
  align-items: flex-start;
  width: 124px;
  font-size: 15px;
  color: #d5e3ef;
}
.option {
  height: 44px;
  line-height: 44px;
}
.cancel {
  width: 120px;
  height: 33px;
  margin-top: 40px;
  background-color: #337bb1;
  color: #fff;
}
.pointer-art {
  position: absolute;
  right: 100%;
  top: 151px;
  width: 280px;
  height: 90px;
  margin-right: -22px;
  overflow: visible;
  pointer-events: none;
}

/* 文档窗口 */
.window {
  position: absolute;
  left: 61.25%;
  right: -120px;
  top: 32px;
  bottom: 66px;
  display: flex;
  flex-direction: column;
  background-color: #fff;
  box-shadow: 0 0 0 1px #123a5c, 0 8px 24px rgba(0, 0, 0, 0.4);
}
.titlebar {
  display: flex;
  flex: none;
  align-items: center;
  gap: 6px;
  height: 40px;
  padding-left: 12px;
}
.titlebar h1 {
  margin: 0;
  font-size: 18px;
  font-weight: normal;
}
.app-icon {
  width: 22px;
  height: 22px;
}
.menubar {
  display: flex;
  flex: none;
  gap: 21px;
  height: 34px;
  padding: 2px 0 0 9px;
  font-size: 18px;
  line-height: 36px;
  color: #111;
}
.menubar button {
  height: 36px;
}
.content {
  flex: 1;
  min-height: 0;
  overflow: hidden;
  padding-left: 45px;
  font-size: 24px;
  line-height: 39px;
  color: #333;
  white-space: nowrap;
}
.content ol,
.content ul {
  margin: 0;
  padding-left: 45px;
}
.plain {
  list-style: none;
}
.step {
  margin-top: 11px;
}
.content .circle,
.content .square {
  margin-top: 11px;
}
.circle {
  list-style: circle;
}
.square {
  list-style: square;
}
.content h2 {
  margin: 19px 0 18px;
  font-size: 24px;
  line-height: 39px;
}
.hash {
  color: #ccc;
}
code {
  padding: 0 2px;
  border: 1px solid #e7eaed;
  border-radius: 3px;
  background-color: #f3f4f4;
  font-family: "DejaVu Sans Mono", monospace;
  font-size: 22px;
  line-height: 24px;
}
.shot {
  display: block;
  margin-left: 3px;
  fill: #222;
}

/* 截图里的文字 */
.t2 { font-size: 2px; }
.t3 { font-size: 3px; }
.t4 { font-size: 4px; }
.t5 { font-size: 5px; }
.t6 { font-size: 6px; }
.t8 { font-size: 8px; }
.t9 { font-size: 9px; }
.t10 { font-size: 10px; }
.t12 { font-size: 12px; }
.mono { font-family: "DejaVu Sans Mono", monospace; }
.t6 .mono { font-size: 5px; }

.statusbar {
  display: flex;
  flex: none;
  align-items: center;
  gap: 26px;
  height: 44px;
  padding-left: 14px;
  border-top: 1px solid #ddd;
}
.statusbar button {
  display: flex;
}

/* 浮在窗口上的小部件 */
.pin {
  position: absolute;
  top: 34px;
  right: 46px;
  width: 24px;
  height: 24px;
}
.netspeed {
  position: absolute;
  top: 211px;
  right: -50px;
  width: 124px;
  padding: 4px 13px;
  border-radius: 4px;
  background-color: rgba(50, 50, 50, 0.92);
  font-size: 18px;
  line-height: 28px;
}
.netspeed div {
  display: flex;
  align-items: center;
  gap: 9px;
}
.up {
  color: #ffa52c;
}
.down {
  color: #7fee2c;
}
.tray {
  position: absolute;
  right: 42px;
  bottom: 30px;
  display: flex;
  align-items: center;
  gap: 18px;
}
.tray button {
  display: flex;
}
.tray .ime {
  justify-content: center;
  width: 24px;
  height: 24px;
  border-radius: 2px;
  background-color: #00a2f2;
  color: #fff;
  font-size: 17px;
  font-style: italic;
  font-weight: 600;
  line-height: 24px;
}
.paw {
  position: absolute;
  right: 0;
  bottom: 0;
  width: 41px;
  height: 19px;
  overflow: hidden;
  border: 1px solid #bcd;
  border-width: 1px 0 0 1px;
  background-color: #fff;
}
```
